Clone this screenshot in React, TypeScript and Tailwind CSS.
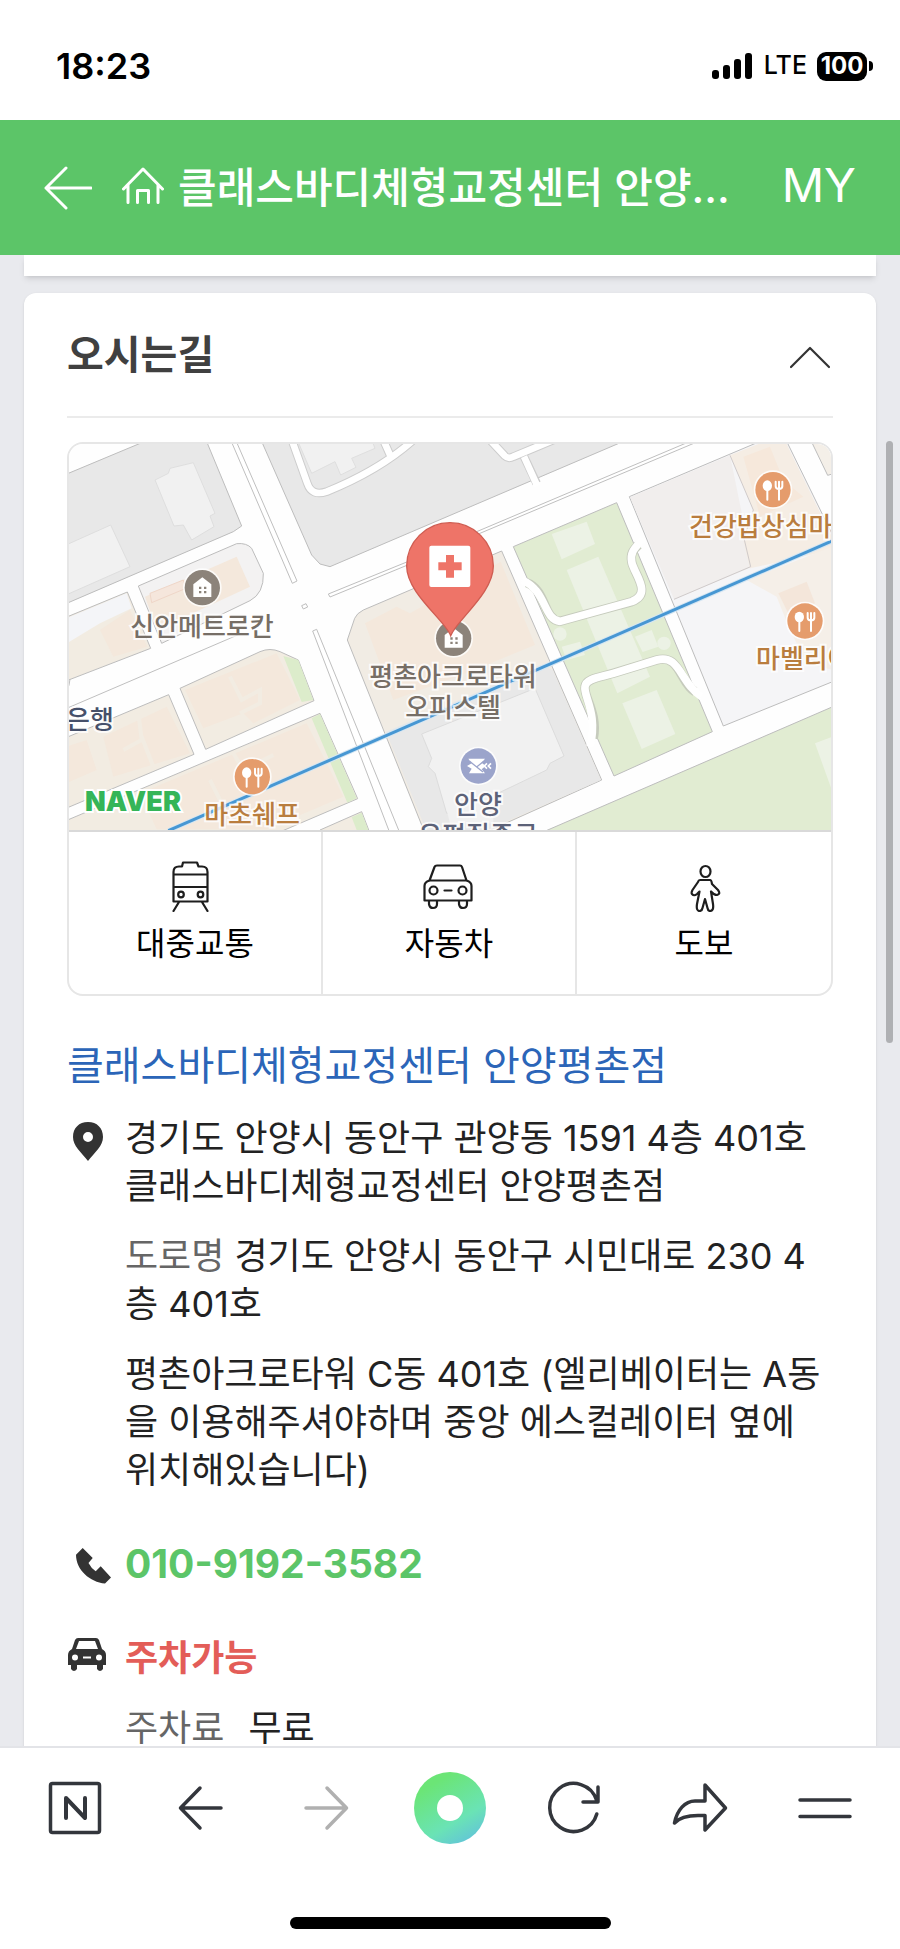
import type { ReactNode } from "react";

type Label = { text: string; x: number; y: number; color: string; align?: "left" };

const labels: Label[] = [
    { text: "신안메트로칸", x: 133, y: 183, color: "text-[#766e66]" },
    { text: "평촌아크로타워", x: 384, y: 233, color: "text-[#766e66]" },
    { text: "오피스텔", x: 384, y: 264, color: "text-[#766e66]" },
    { text: "마초쉐프", x: 183, y: 371, color: "text-[#b97d3e]" },
    { text: "건강밥상심마니", x: 620, y: 83, color: "text-[#b97d3e]", align: "left" },
    { text: "마벨리아", x: 687, y: 215, color: "text-[#b97d3e]", align: "left" },
    { text: "은행", x: -3, y: 276, color: "text-[#46506a]", align: "left" },
    { text: "안양", x: 409, y: 361, color: "text-[#5c6278]" },
    { text: "우편집중국", x: 409, y: 392, color: "text-[#5c6278]" },
];

function Food({ x, y }: { x: number; y: number }) {
    return (
        <g transform={`translate(${x} ${y})`}>
            <circle r="58" fill="#fff" opacity=".8" />
            <circle r="53" fill="#e59c6c" />
            <ellipse cx="-17" cy="-12" rx="14" ry="16" fill="#fff" />
            <path d="M-17 0V30M18 -24V30M8 -24V-10Q8 -2 18 -2Q28 -2 28 -10V-24" fill="none" stroke="#fff" strokeWidth="6" strokeLinecap="round" />
        </g>
    )
}

function Building({ x, y }: { x: number; y: number }) {
    return (
        <g transform={`translate(${x} ${y})`}>
            <circle r="58" fill="#fff" opacity=".8" />
            <circle r="53" fill="#8c837a" />
            <path d="M-27 28V-10L0 -31L27 -10V28Z" fill="#fff" />
            <path d="M-10 -3h7v7h-7zM5 -3h7v7h-7zM-10 10h7v7h-7zM5 10h7v7h-7z" fill="#8c837a" />
        </g>
    )
}

function MapDrawing() {
    return (
        <svg viewBox="27 42 2286 1158" className="block w-full" aria-hidden="true">
            <rect x="21" y="36" width="2298" height="1164" fill="#fefefe" />

            {/* grey blocks */}
            <g fill="#e8e8e8" stroke="#bdbdbd" strokeWidth="3">
                <path d="M18 133L250 36V30H438L545 288L520 305L18 521Z" />
                <path d="M603 30L755 375L780 402L810 410L1700 30Z" />
                <path d="M18 52L70 30H18Z" fill="#fff" />
            </g>
            <g fill="#f1f1f1" stroke="#dedede" strokeWidth="3">
                <path d="M285 150L325 130L330 115L400 98L465 250L450 258L462 290L395 330L370 285L342 288Z" />
                <path d="M18 345L152 285L210 410L18 495Z" />
                <path d="M712 30L755 130L825 95L842 135L888 112L875 85L945 55L935 30Z" />
            </g>
            <g fill="none" strokeLinejoin="round">
                <path d="M692 20L742 160Q755 200 800 185Q960 120 1060 30M970 30L990 75M1290 30L1335 78Q1345 88 1360 80L1480 30M1392 80L1430 160" stroke="#cdcdcd" strokeWidth="26" />
                <path d="M692 20L742 160Q755 200 800 185Q960 120 1060 30M970 30L990 75M1290 30L1335 78Q1345 88 1360 80L1480 30M1392 80L1432 168" stroke="#fff" strokeWidth="20" />
            </g>

            {/* road medians */}
            <g fill="#fff" stroke="#bfbfbf" strokeWidth="3">
                <path d="M512 30L697 460L711 453L527 30Z" />
                <path d="M805 492L1060 388V398L810 501Z" />
                <path d="M1250 305L1900 30H1925L1255 312" />
                <path d="M758 603L770 598L1020 1210H990Z" />
                <path d="M725 527L738 521L743 531L730 537Z" />
                <path d="M18 836L540 612" fill="none" />
                <path d="M18 715Q42 745 18 785" fill="none" />
            </g>

            {/* left blocks */}
            <g fill="#f2ece2" stroke="#bdbdbd" strokeWidth="3">
                <path d="M235 468L530 341Q560 338 575 355L610 430Q612 490 570 512L305 640Z" fill="#f3f2f2" />
                <path d="M18 562L202 486L272 655L18 753Z" />
                <path d="M360 775L600 665Q630 652 660 665L715 690L762 812L437 958Z" />
                <path d="M18 923L326 794L402 973L18 1135Z" />
                <path d="M18 1172L780 850L893 1106L650 1210H18Z" />
                <path d="M780 1200L905 1145L930 1210H770Z" />
            </g>
            <g fill="#f4e8dc">
                <path d="M255 500L530 380L570 470L290 600Z" />
                <path d="M120 600L210 540L262 650L160 680Z" />
                <path d="M375 780L650 670L720 810L580 880L550 850L430 895Z" />
                <path d="M130 920L320 830L390 970L160 1040Z" />
                <path d="M18 950L80 930L110 1020L18 1060Z" />
                <path d="M240 1090L740 880L850 1100L620 1198H290Z" />
            </g>
            <path d="M20 565L200 490L215 535L120 580L20 640Z" fill="#f4f5f8" />
            <path d="M270 490L370 450L378 475L275 518Z" fill="#f5e6dc" stroke="#efd6c8" strokeWidth="3" />
            <path d="M510 740L545 810L600 780L600 820L540 850M235 850L245 930L190 960M245 920L280 1010M450 1050L480 1110M520 970L550 1020L640 975" fill="none" stroke="#f2ece2" strokeWidth="12" />
            <path d="M670 678L715 690L760 810L725 816Z" fill="#dceccb" />
            <path d="M755 865L780 852L890 1105L862 1118Z" fill="#dceccb" />
            <path d="M875 1162L905 1148L925 1200H890Z" fill="#dceccb" />

            {/* tower block */}
            <path d="M862 630L884 565Q890 550 910 540L1325 363L1625 1050L1270 1210H1095Z" fill="#f1ece4" stroke="#bdbdbd" strokeWidth="3" />
            <path d="M915 580L1010 530L1050 550L1322 395L1425 645L1230 725L1000 810Z" fill="#f4e8dc" />
            <path d="M978 905L1440 705L1478 720L1623 1050L1270 1205H1100Z" fill="#e8e8e8" />
            <path d="M1085 912L1425 775L1512 978L1470 1000L1460 1020L1230 1130L1160 1150L1125 1030L1105 1010L1115 985Z" fill="#f1f1f1" stroke="#dcdcdc" strokeWidth="3" />
            <path d="M1160 1140L1300 1090V1180H1170Z" fill="#f1f1f1" />

            {/* park */}
            <path d="M1360 350L1670 218L1957 905L1662 1038Z" fill="#e1ecd2" stroke="#bdbdbd" strokeWidth="3" />
            <g fill="#ecf2e5">
                <path d="M1475 312L1580 275L1605 342L1505 388Z" />
                <path d="M1520 420L1615 380L1770 740L1672 790Z" />
                <path d="M1687 820L1790 780L1846 912L1745 957Z" />
                <path d="M1725 620L1775 600L1795 650L1748 666Z" />
                <circle cx="1500" cy="612" r="20" />
                <circle cx="1812" cy="640" r="20" />
                <path d="M1505 650L1560 635L1575 675L1520 690Z" />
            </g>
            <g fill="none" strokeLinejoin="round">
                <path d="M1400 458C1460 480 1450 570 1500 574L1715 515C1780 490 1720 430 1715 395C1710 365 1725 355 1735 345M1600 925C1615 850 1570 800 1575 770C1578 745 1620 742 1660 730L1790 690C1860 670 1860 760 1905 785" stroke="#c6cbbd" strokeWidth="28" />
                <path d="M1385 450C1460 480 1450 570 1500 574L1715 515C1780 490 1720 430 1715 395C1710 365 1725 355 1750 325M1590 950C1615 850 1570 800 1575 770C1578 745 1620 742 1660 730L1790 690C1860 670 1860 760 1925 800" stroke="#fff" strokeWidth="23" />
            </g>

            {/* right block */}
            <path d="M1708 200L2110 30H2178L2330 340V750L1990 888Z" fill="#f5f5f7" stroke="#bdbdbd" strokeWidth="3" />
            <path d="M1710 202L2010 76L2078 410L1842 508Z" fill="#f1eeed" />
            <path d="M2010 76L2115 34H2176L2318 325V360L2070 415L2050 330L2080 240Z" fill="#f5ede4" />
            <path d="M2050 80L2130 50L2170 150L2230 200L2100 260Z" fill="#f6e8db" />
            <path d="M2060 450L2318 350V720L2240 700L2190 600L2150 500Z" fill="#f5efe8" />
            <path d="M2155 490L2240 455L2265 520L2190 560Z" fill="#f4e6da" />
            <path d="M2010 76L2080 240L2052 325L2072 410L1842 508" fill="none" stroke="#cfcaca" strokeWidth="3" />
            <path d="M2252 30L2303 136L2330 128V30Z" fill="#f4efe8" stroke="#bdbdbd" strokeWidth="3" />
            <path d="M1440 1210L2330 825V1210Z" fill="#e1ecd2" stroke="#bdbdbd" strokeWidth="3" />
            <path d="M2265 940L2330 915V1120Z" fill="#ecf2e5" />

            <path d="M325 1202L2325 329" stroke="#d5e6f2" strokeWidth="15" />
            <path d="M325 1202L2325 329" stroke="#4797d3" strokeWidth="9" />

            <Building x={427} y={473} />
            <Building x={1181} y={625} />
            <Food x={577} y={1040} />
            <Food x={2139} y={179} />
            <Food x={2235} y={573} />
            <g transform="translate(1255 1008)">
                <circle r="58" fill="#fff" opacity=".8" />
                <circle r="53" fill="#9ba4cb" />
                <path d="M-30 -22H20L10 -10L22 0L10 10L20 22H-28L-20 8L-34 0L-20 -8Z" fill="#fff" />
                <path d="M-26 -14L-5 3L16 -14M-4 4L14 18" fill="none" stroke="#9ba4cb" strokeWidth="4" />
                <path d="M26 -8L18 0L26 8M38 -8L30 0L38 8" fill="none" stroke="#fff" strokeWidth="5" />
            </g>

            <path d="M1172 617C1155 570 1040 490 1040 408A130 130 0 0 1 1300 408C1300 490 1190 570 1172 617Z" fill="#ee7468" stroke="#cf5d52" strokeWidth="4" />
            <rect x="1108" y="347" width="123" height="124" rx="6" fill="#fff" />
            <path d="M1158 375h24v22h23v24h-23v22h-24v-22h-23v-24h23z" fill="#ee7468" />
        </svg>
    )
}

function RouteMap() {
    return (
        <div className="relative overflow-hidden border-b-2 border-[#d9d9d9]">
            <MapDrawing />
            {labels.map((label) => (
                <span
                    key={label.text}
                    className={`absolute -translate-y-1/2 whitespace-nowrap text-[26px] leading-8 font-medium [-webkit-text-stroke:4px_#fffc] [paint-order:stroke_fill] ${label.color} ${label.align === "left" ? "" : "-translate-x-1/2"}`}
                    style={{ left: `${(label.x / 762) * 100}%`, top: `${(label.y / 386) * 100}%` }}
                >
                    {label.text}
                </span>
            ))}
            <span className="absolute bottom-3 left-4 text-[27px] leading-8 font-black text-[#35b558] [-webkit-text-stroke:4px_#fff] [paint-order:stroke_fill]">NAVER</span>
        </div>
    )
}

function RouteButton({ label, children }: { label: string; children: ReactNode }) {
    return (
        <button className="flex flex-col items-center gap-2 pt-7 pb-[26px] text-[32px] leading-12 text-black">
            <svg viewBox="0 0 52 52" className="size-[52px]" fill="none" stroke="#1e1e1e" strokeWidth="2.2" strokeLinejoin="round" strokeLinecap="round">
                {children}
            </svg>
            {label}
        </button>
    )
}

function StatusBar() {
    return (
        <div className="flex h-30 shrink-0 items-center justify-between pt-3 pr-[27px] pl-14 text-black">
            <span className="text-4xl font-semibold">18:23</span>
            <div className="flex items-center gap-2.5">
                <svg viewBox="0 0 42 26" className="h-[26px] w-[42px]" fill="#000">
                    <rect x="0" y="17" width="7" height="9" rx="3" />
                    <rect x="11" y="12" width="7" height="14" rx="3" />
                    <rect x="22" y="6" width="7" height="20" rx="3" />
                    <rect x="33" y="0" width="7" height="26" rx="3" />
                </svg>
                <span className="text-[25px] font-medium">LTE</span>
                <div className="flex items-center gap-0.5">
                    <span className="flex h-[29px] w-[50px] items-center justify-center rounded-[9px] bg-black text-2xl font-bold text-white">100</span>
                    <span className="h-2.5 w-1 rounded-r-full bg-black" />
                </div>
            </div>
        </div>
    )
}

function Header() {
    return (
        <header className="flex h-[135px] shrink-0 items-center bg-[#5cc568] px-11 text-white">
            <button aria-label="뒤로">
                <svg viewBox="0 0 48 44" className="h-11 w-12" fill="none" stroke="#fff" strokeWidth="3" strokeLinecap="round" strokeLinejoin="round">
                    <path d="M22 2L2 22L22 42M2 22H47" />
                </svg>
            </button>
            <a href="#" aria-label="홈" className="ml-[30px] pb-1">
                <svg viewBox="0 0 42 38" className="h-[38px] w-[42px]" fill="none" stroke="#fff" strokeWidth="3" strokeLinejoin="round" strokeLinecap="round">
                    <path d="M1.5 22L21 2L40.5 22M6 18V35.5M36 18V35.5M15.5 35.5V23.5H26.5V35.5" />
                </svg>
            </a>
            <h1 className="ml-3.5 min-w-0 flex-1 text-[42px] font-medium whitespace-nowrap">클래스바디체형교정센터 안양...</h1>
            <a href="#" className="pb-1 text-[47px]">MY</a>
        </header>
    )
}

function Row({ icon, children }: { icon: ReactNode; children: ReactNode }) {
    return (
        <div className="flex">
            <div className="w-[58px] shrink-0">{icon}</div>
            <div className="flex min-w-0 flex-1 flex-col gap-[22px] break-all">{children}</div>
        </div>
    )
}

function ToolIcon({ d }: { d: string }) {
    return (
        <svg viewBox="0 0 60 60" className="size-15" fill="none" stroke="currentColor" strokeWidth="3.5" strokeLinejoin="round" strokeLinecap="round">
            <path d={d} />
        </svg>
    )
}

function Toolbar() {
    return (
        <nav className="shrink-0 border-t-2 border-[#e3e4e8] bg-white text-[#33363c]">
            <div className="grid h-30 grid-cols-7 place-items-center px-3">
                <button aria-label="네이버 홈">
                    <svg viewBox="0 0 60 60" className="size-15" fill="none" stroke="currentColor" strokeWidth="3.5" strokeLinejoin="round" strokeLinecap="round">
                        <rect x="5.5" y="5.5" width="49" height="49" rx="2" />
                        <path d="M21 40V20L40 40V20" strokeWidth="4" />
                    </svg>
                </button>
                <button aria-label="이전">
                    <ToolIcon d="M30 10L10.5 30L30 50M10.5 30H51" />
                </button>
                <button aria-label="다음" className="text-[#b0b0b0]">
                    <ToolIcon d="M32 10L51.5 30L32 50M51.5 30H11" />
                </button>
                <button aria-label="그린닷" className="flex size-[72px] items-center justify-center rounded-full bg-[linear-gradient(150deg,#6be576_20%,#6ae3b5_65%,#5fb9e6_100%)]">
                    <span className="size-[26px] rounded-full bg-white" />
                </button>
                <button aria-label="새로고침">
                    <ToolIcon d="M51.5 22A24 24 0 1 0 51.8 36M53 9V24H38" />
                </button>
                <button aria-label="공유">
                    <ToolIcon d="M35 7L55.5 30L35 52V37.5H28C18 37.5 10 39 4.5 45C7 32 15 23 25 23H35Z" />
                </button>
                <button aria-label="메뉴">
                    <ToolIcon d="M5 22H55M5 38.5H55" />
                </button>
            </div>
            <div className="flex justify-center pt-[49px] pb-5">
                <span className="h-3 w-[321px] rounded-full bg-black" />
            </div>
        </nav>
    )
}

function App() {
    return (
        <div className="flex h-screen flex-col overflow-hidden bg-white font-['Inter','Noto_Sans_CJK_KR',sans-serif]">
            <StatusBar />
            <Header />

            <main className="relative flex min-h-0 flex-1 flex-col gap-[17px] overflow-hidden bg-[#e9eaee] px-6">
                <div className="h-[21px] shrink-0 bg-white shadow-md" />

                <section className="shrink-0 rounded-t-xl bg-white px-[43px] pb-10 text-4xl leading-12 text-[#222] shadow">
                    <div className="flex h-[125px] items-center justify-between border-b-2 border-[#ebebeb]">
                        <h2 className="text-[40px] font-bold text-[#404040]">오시는길</h2>
                        <button aria-label="접기" className="pt-1">
                            <svg viewBox="0 0 44 24" className="h-6 w-11" fill="none" stroke="#333" strokeWidth="2.2" strokeLinecap="round" strokeLinejoin="round">
                                <path d="M2 22L21 3L40 22" />
                            </svg>
                        </button>
                    </div>

                    <div className="mt-6 overflow-hidden rounded-2xl border-2 border-[#e6e6e6]">
                        <RouteMap />
                        <div className="grid grid-cols-3 divide-x-2 divide-[#e6e6e6]">
                            <RouteButton label="대중교통">
                                <path d="M4.5 41.5V12Q4.5 6.5 10 6.5H13L14 2.5H28L29.5 6.5H33Q38.5 6.5 38.5 12V41.5ZM4.5 14.5H38.5M4.5 27H38.5M10 42L4.5 51M33 42L38.5 51" />
                                <circle cx="12" cy="34.5" r="2.8" />
                                <circle cx="31.5" cy="34.5" r="2.8" />
                            </RouteButton>
                            <RouteButton label="자동차">
                                <path d="M6.5 20.5L11.5 7Q12 5.5 14 5.5H37Q38.5 5.5 39 7L43.5 20.5M6.5 20.5H43.5Q48.5 22 48.5 26V40.5H1.5V26Q1.5 22 6.5 20.5ZM21.5 30.5H28.5M6 41V44Q6.5 48 10 48Q14 48 14 44V41M36 41V44Q36.5 48 40 48Q44 48 44 44V41" />
                                <circle cx="10.5" cy="30.5" r="4" />
                                <circle cx="39.5" cy="30.5" r="4" />
                            </RouteButton>
                            <RouteButton label="도보">
                                <ellipse cx="27.5" cy="11.5" rx="5" ry="5.5" />
                                <path d="M22 20H32Q33.5 20 34 24L40 30Q43 34 39 35Q36 35 33 31.5L35 44Q36 51 32 51Q30 51 29.5 48L27 39L24.5 48Q24 51 21.5 51Q18 51 19 44L21.5 31.5L19 34Q16 36.5 14 34Q13 33 14.5 30L20 22Q20.5 20 22 20Z" />
                            </RouteButton>
                        </div>
                    </div>

                    <h3 className="mt-[46px] text-[40px] font-normal">
                        <a href="#" className="text-[#2b65b8]">클래스바디체형교정센터 안양평촌점</a>
                    </h3>

                    <div className="mt-6 flex flex-col gap-[46px]">
                        <Row
                            icon={
                                <svg viewBox="0 0 30 40" className="mt-2 ml-1.5 h-10 w-[30px]">
                                    <path fillRule="evenodd" d="M15 0C24 0 30 6 30 15C30 24 22 30 15 39C8 30 0 24 0 15C0 6 6 0 15 0ZM15 10A5 5 0 1 0 15 20A5 5 0 1 0 15 10Z" fill="#333" />
                                </svg>
                            }
                        >
                            <p>경기도 안양시 동안구 관양동 1591 4층 401호 클래스바디체형교정센터 안양평촌점</p>
                            <p><span className="text-[#666]">도로명</span> 경기도 안양시 동안구 시민대로 230 4층 401호</p>
                            <p>평촌아크로타워 C동 401호 (엘리베이터는 A동을 이용해주셔야하며 중앙 에스컬레이터 옆에 위치해있습니다)</p>
                        </Row>
                        <Row
                            icon={
                                <svg viewBox="0 0 36 36" className="mt-2 ml-[9px] size-9">
                                    <path d="M6.7 0L16.7 10L12.5 15Q15 20 19.7 23.3L24.7 18.3L35 29.5L29 35.5C14 34 0 22 0 6.7Z" fill="#333" />
                                </svg>
                            }
                        >
                            <a href="tel:010-9192-3582" className="text-[39px] font-bold text-[#5cc568]">010-9192-3582</a>
                        </Row>
                        <Row
                            icon={
                                <svg viewBox="0 0 38 34" className="mt-1 ml-px h-[34px] w-[38px]">
                                    <path fillRule="evenodd" d="M10 0H28Q30 0 31 2L34 11Q38 13 38 17V27H35V31Q32 35 29 31V27H9V31Q6 35 3 31V27H0V17Q0 13 4 11L7 2Q8 0 10 0ZM11 3L8 11H30L27 3ZM7 16.5A3 3 0 1 0 7 22.5A3 3 0 1 0 7 16.5ZM31 16.5A3 3 0 1 0 31 22.5A3 3 0 1 0 31 16.5ZM15 18.5V20.5H23V18.5Z" fill="#333" />
                                </svg>
                            }
                        >
                            <p className="font-semibold text-[#e35d58]">주차가능</p>
                            <p><span className="mr-6 text-[#666]">주차료</span>무료</p>
                        </Row>
                    </div>
                </section>

                <span className="absolute top-[186px] right-[7px] h-[602px] w-[7px] rounded-full bg-[#afb0b3]" />
            </main>

            <Toolbar />
        </div>
    )
}

export default App ;
